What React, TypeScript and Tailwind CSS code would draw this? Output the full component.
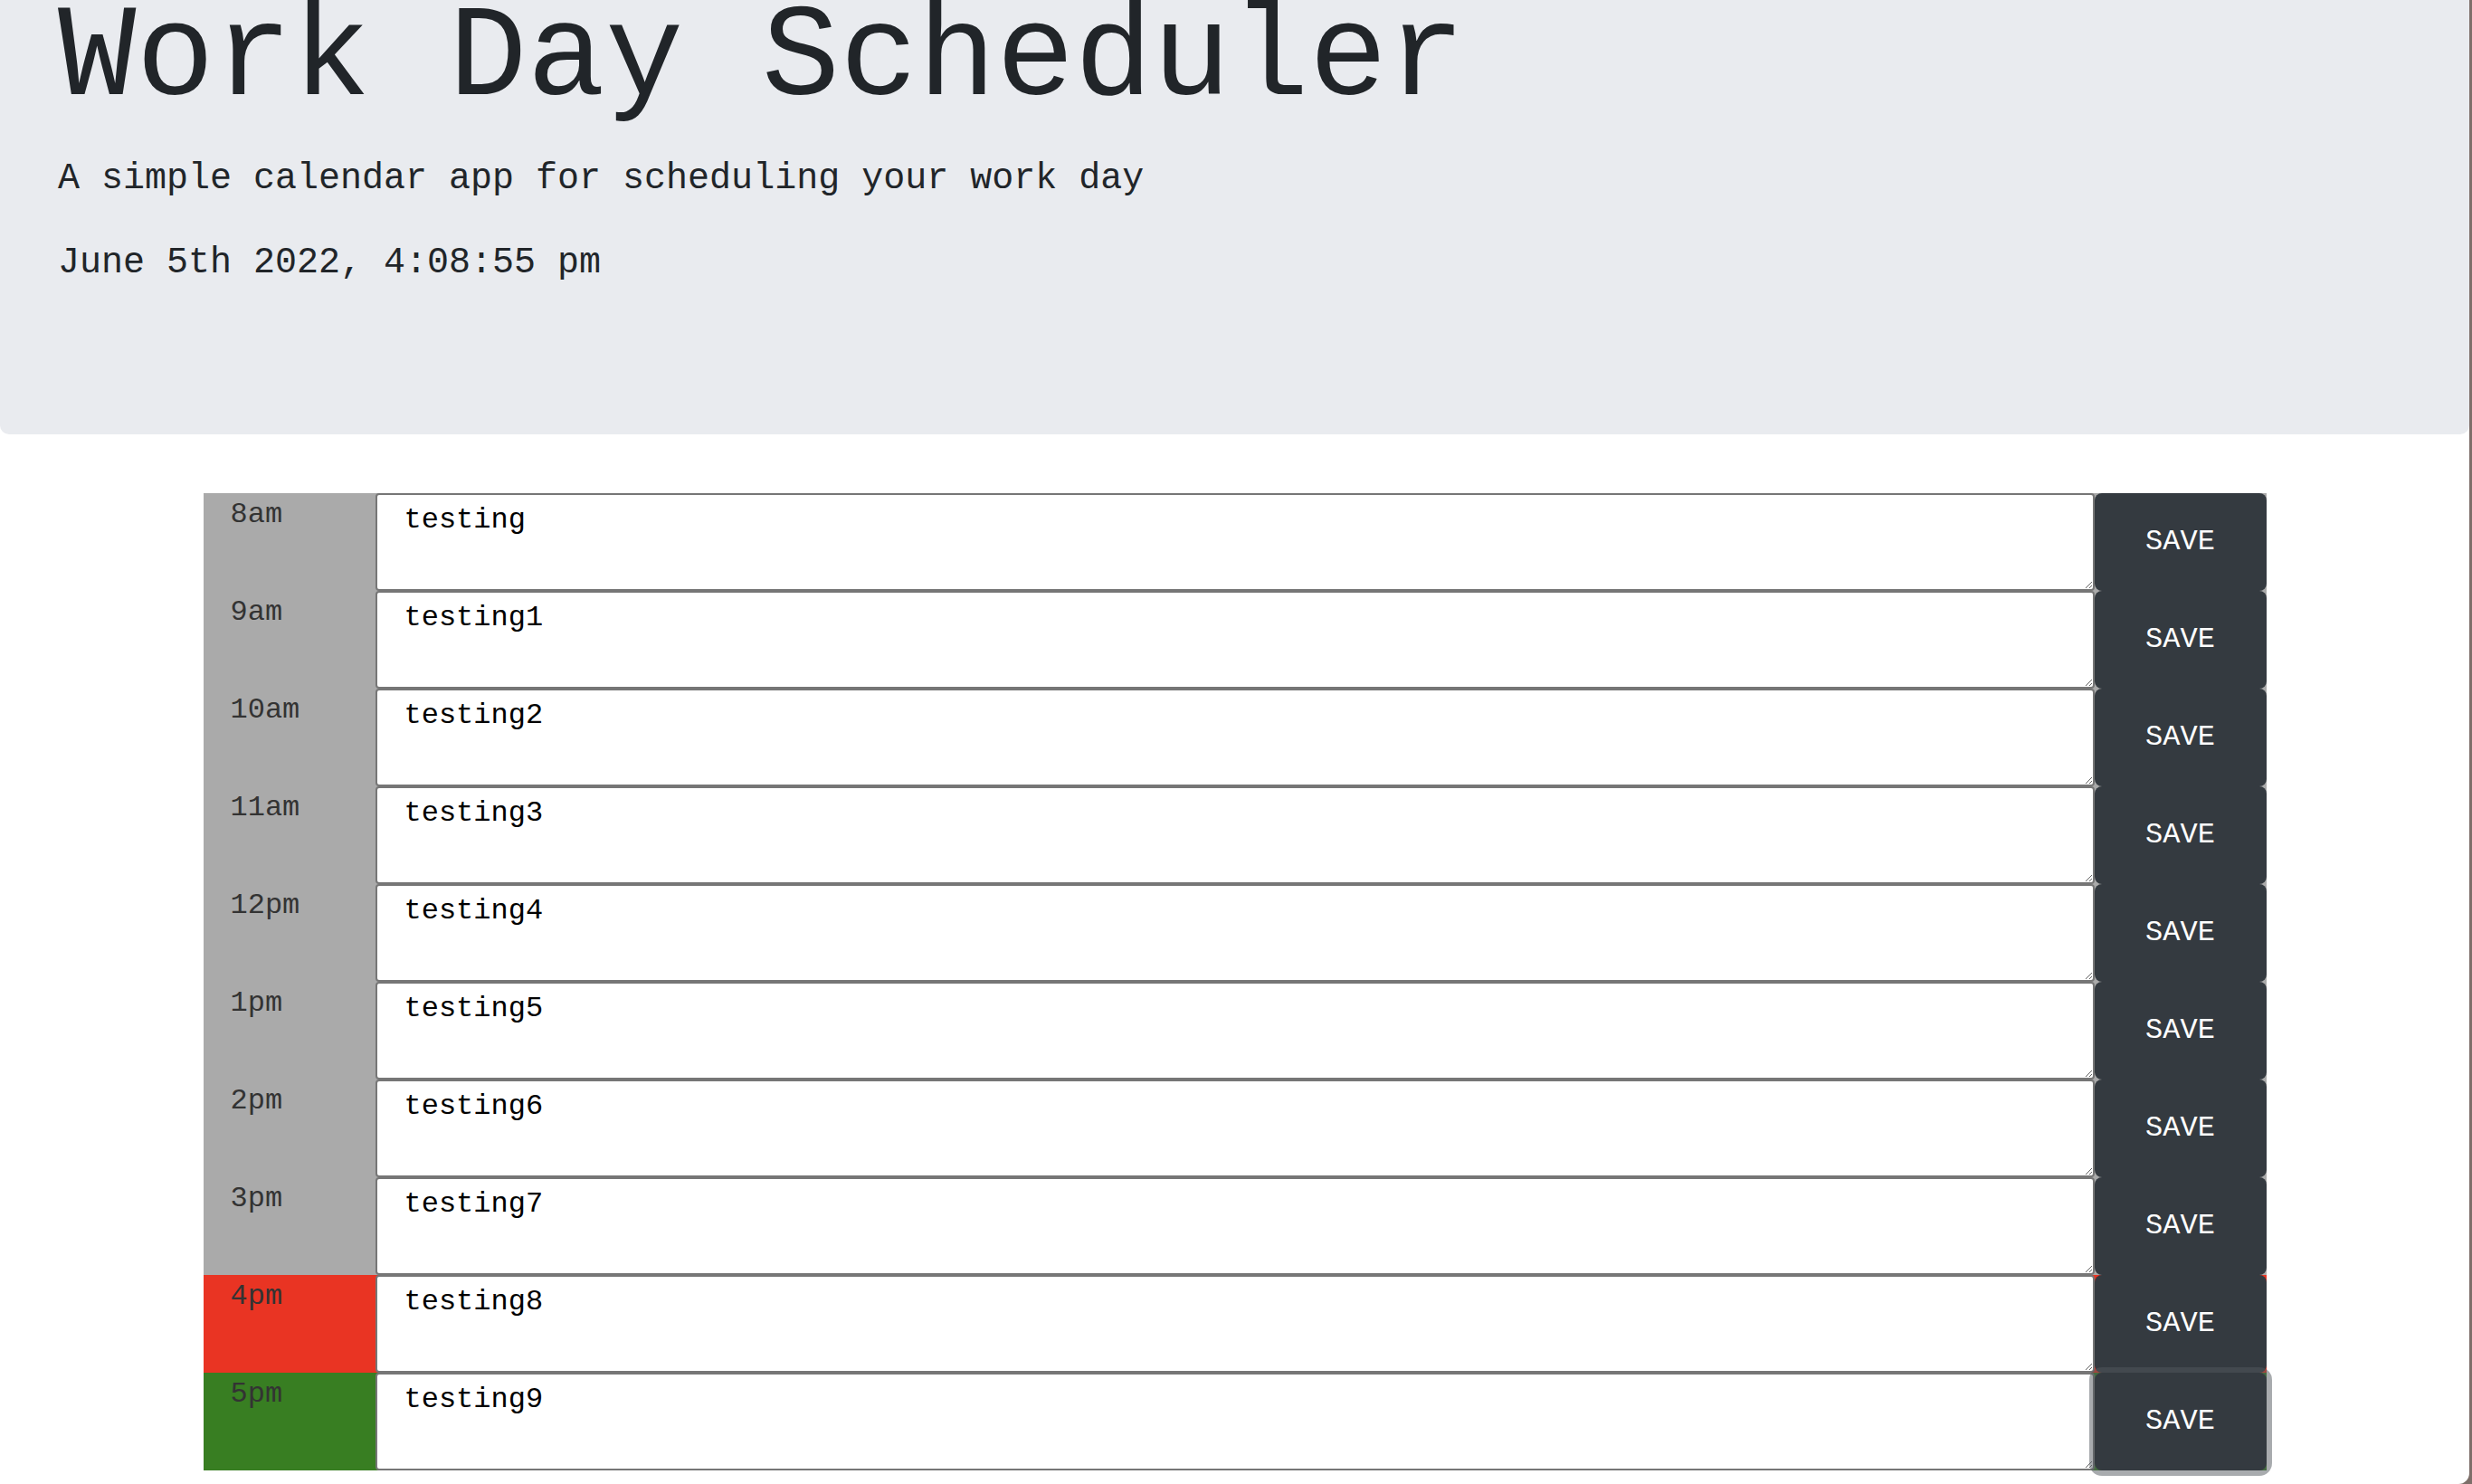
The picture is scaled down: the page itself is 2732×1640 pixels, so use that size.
import React from "react";

type Row = { hour: string; text: string; status: "past" | "present" | "future" };

const rows: Row[] = [
  { hour: "8am", text: "testing", status: "past" },
  { hour: "9am", text: "testing1", status: "past" },
  { hour: "10am", text: "testing2", status: "past" },
  { hour: "11am", text: "testing3", status: "past" },
  { hour: "12pm", text: "testing4", status: "past" },
  { hour: "1pm", text: "testing5", status: "past" },
  { hour: "2pm", text: "testing6", status: "past" },
  { hour: "3pm", text: "testing7", status: "past" },
  { hour: "4pm", text: "testing8", status: "present" },
  { hour: "5pm", text: "testing9", status: "future" },
];

const statusBg: Record<Row["status"], string> = {
  past: "bg-[#aaaaaa]",
  present: "bg-[#e93423]",
  future: "bg-[#387e22]",
};

export default function App() {
  return (
    <div className="w-full h-[1640px] bg-[#7d6e69] font-['Courier_New','Nimbus_Mono_PS','FreeMono','Liberation_Mono',monospace] text-[#212529]">
      <div className="w-[2729px] h-[1640px] bg-white rounded-br-[12px] overflow-hidden">
        <header className="h-[480px] bg-[#e9ebef] rounded-b-[10px] px-[64px]">
          <h1 className="text-[144px] leading-[132px] font-normal mb-[36px]">Work Day Scheduler</h1>
          <p className="text-[40px] leading-[60px] mb-[33px]">A simple calendar app for scheduling your work day</p>
          <p className="text-[40px] leading-[60px]">June 5th 2022, 4:08:55 pm</p>
        </header>
        <div className="w-[2280px] mx-auto mt-[65px]">
          {rows.map((r, i) => (
            <div key={r.hour} className={`flex h-[108px] ${statusBg[r.status]}`}>
              <div className="w-[190px] shrink-0 pl-[30px] text-[32px] leading-[48px] text-[#333333]">{r.hour}</div>
              <textarea
                defaultValue={r.text}
                className="w-[1900px] shrink-0 h-[108px] border-2 border-[#767676] rounded-[4px] bg-white text-black text-[32px] leading-[48px] py-[4px] px-[30px] outline-none"
              />
              <button
                className={`w-[190px] shrink-0 h-[108px] bg-[#343a40] text-white text-[32px] rounded-[8px] font-['Courier_New','Nimbus_Mono_PS','FreeMono','Liberation_Mono',monospace] ${
                  i === rows.length - 1 ? "relative z-10 shadow-[0_0_0_6px_rgba(82,88,93,0.5)]" : ""
                }`}
              >
                SAVE
              </button>
            </div>
          ))}
        </div>
      </div>
    </div>
  );
}
